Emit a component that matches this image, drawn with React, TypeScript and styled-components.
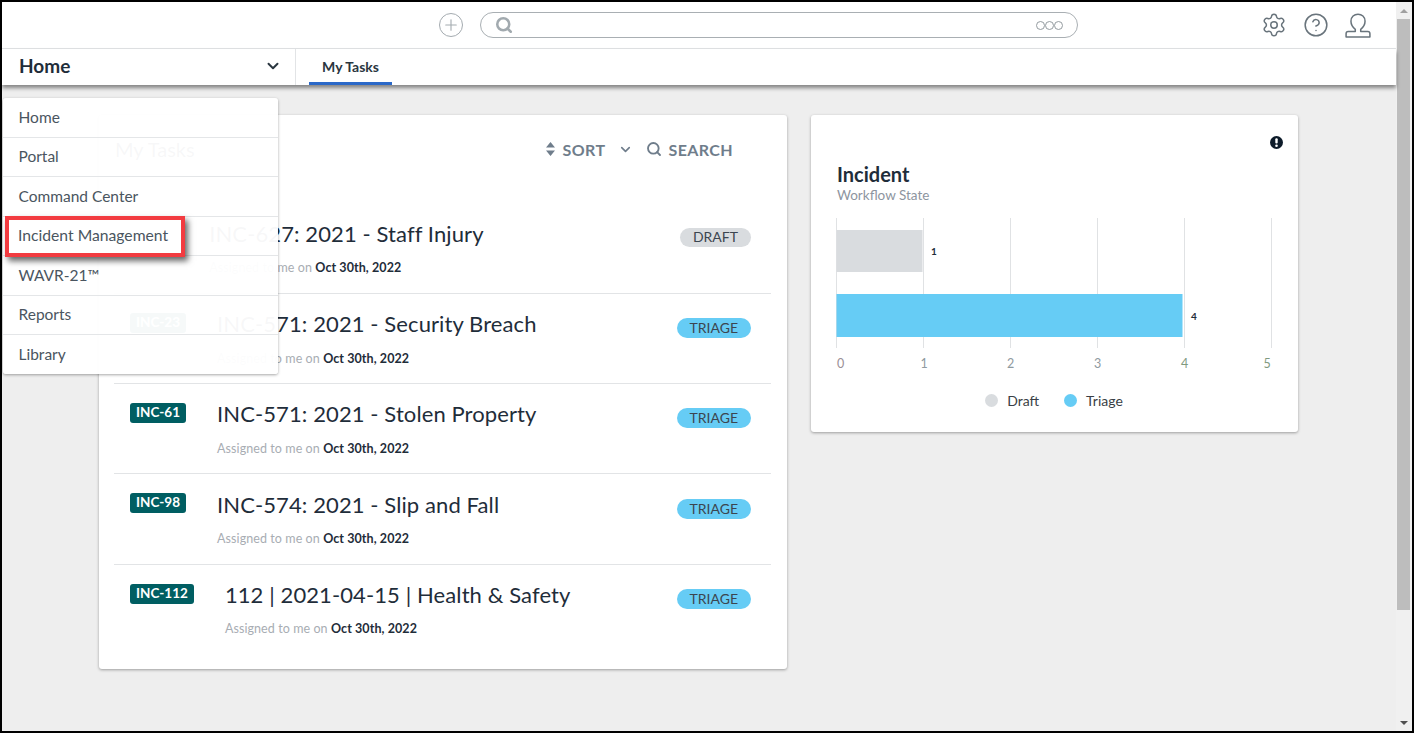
import React from "react";
import styled, { createGlobalStyle } from "styled-components";
import { Settings, CircleHelp, Plus, Search, ChevronDown } from "lucide-react";

const Global = createGlobalStyle`
  html, body { margin: 0; padding: 0; background: #000; }
  body { font-family: Lato, "Open Sans", sans-serif; overflow: hidden; }
  * { box-sizing: border-box; }
`;

const Frame = styled.div`
  position: relative; width: 1414px; height: 733px;
  border: 2px solid #000; background: #eee; display: flex; overflow: hidden;
`;
const Page = styled.div`width: 1394px; display: flex; flex-direction: column; position: relative;`;
const Scrollbar = styled.div`
  width: 16px; background: #f0f0f0; display: flex; flex-direction: column; align-items: stretch;
  padding: 0 2px 0 1px; position: relative;
`;
const Arrow = styled.div<{ $up?: boolean }>`
  height: 17px; display: flex; align-items: center; justify-content: center;
  &::after {
    content: ""; width: 0; height: 0; border-left: 4px solid transparent; border-right: 4px solid transparent;
    ${(p) => (p.$up ? "border-bottom: 4px solid #a0a0a0;" : "border-top: 4px solid #505050;")}
  }
`;
const Thumb = styled.div`height: 591px; background: #bdbdbd;`;
const Track = styled.div`flex: 1;`;

const TopBar = styled.header`
  height: 47px; background: #fff; border-bottom: 1px solid #e2e4e6; display: flex; align-items: center;
  padding: 0 25px 1px 437px; flex: none;
`;
const PlusCircle = styled.span`
  width: 24px; height: 24px; border-radius: 50%; border: 1.8px solid #a4abb0; color: #a4abb0;
  display: flex; align-items: center; justify-content: center; flex: none;
`;
const SearchPill = styled.div`
  width: 598px; height: 26px; margin-left: 17px; border: 1px solid #a9afb3; border-radius: 13px;
  display: flex; align-items: center; justify-content: space-between; padding: 0 14px 0 14px; color: #a2aaaf;
`;
const Dots = styled.span`display: flex; margin-top: 2px;`;
const Dot = styled.i`width: 9.5px; height: 9.5px; border: 1.6px solid #949ba0; border-radius: 50%; margin-left: -.5px;`;
const TopIcons = styled.div`margin-left: auto; display: flex; align-items: center; gap: 16px; color: #69747c;`;

const SubBar = styled.nav`
  height: 36px; background: #fff; display: flex; flex: none; position: relative; z-index: 2;
  box-shadow: 0 3px 4px rgba(0,0,0,.45);
`;
const AppSelect = styled.div`
  width: 294px; border-right: 1px solid #e2e4e6; display: flex; align-items: center; justify-content: space-between;
  padding: 0 13px 3px 17px; font-size: 19px; font-weight: 700; color: #1f2d3a;
`;
const Tab = styled.div`
  margin-left: 13px; width: 83px; text-align: center; font-size: 14px; font-weight: 700; color: #2a3640;
  border-bottom: 3px solid #2a68c8; line-height: 35px; height: 36px;
`;

const Main = styled.main`display: flex; align-items: flex-start; gap: 24px; padding: 30px 0 0 97px; flex: 1;`;
const Card = styled.section<{ $w: number; $h: number }>`
  width: ${(p) => p.$w}px; height: ${(p) => p.$h}px; background: #fff; border-radius: 3px;
  box-shadow: 0 1px 3px rgba(0,0,0,.35);
`;
const TaskCard = styled(Card)`padding: 0 16px 0 15px;`;
const CardHead = styled.div`
  height: 88.400px; display: flex; align-items: center; padding: 0 38px 20px 1px;
`;
const CardTitle = styled.h2`margin: 0; font-size: 20px; font-weight: 400; color: #1f2d3a; margin-right: auto;`;
const Tool = styled.span`
  display: flex; align-items: center; font-size: 16px; font-weight: 700; color: #6f7d8b; letter-spacing: .4px;
`;
const SortArrows = styled.svg`margin-right: 8px;`;
const SortChevron = styled(Tool)`margin: 0 13px 0 13px;`;
const SearchIcon = styled(Search)`margin-right: 6px;`;

const Row = styled.div`
  height: 90.300px; border-bottom: 1px solid #e2e4e6; padding: 19px 20px 0 16px; display: flex; align-items: flex-start;
  &:last-child { border-bottom: 0; }
`;
const Badge = styled.span`
  background: #005e62; color: #fff; font-size: 13.500px; font-weight: 700; height: 20px; line-height: 18px;
  padding: 0 6px; border-radius: 3px; flex: none; white-space: nowrap;
`;
const RowBody = styled.div`margin-left: 31px; flex: 1; margin-top: -2.600px;`;
const RowTitle = styled.div`font-size: 22px; line-height: 28px; color: #1f2d3a; white-space: nowrap; letter-spacing: .1px;`;
const RowSub = styled.div`font-size: 12.500px; letter-spacing: .08px; line-height: 16px; margin-top: 12.500px; color: #a8adb3;`;
const RowDate = styled.b`color: #1f2d3a; font-weight: 700;`;
const Status = styled.span<{ $draft?: boolean }>`
  margin-top: 5.400px; height: ${(p) => (p.$draft ? 19 : 20)}px; line-height: ${(p) => (p.$draft ? 18 : 19)}px;
  border-radius: 10px; padding: 0 13px; font-size: 14px; color: #3c4650;
  background: ${(p) => (p.$draft ? "#d9dcdf" : "#66ccf5")}; flex: none;
`;

const ChartCard = styled(Card)`padding: 0 26px 0 25px; position: relative;`;
const Info = styled.svg`display: block; margin: 21px 0 0 auto; position: relative; left: 11px;`;
const ChartTitle = styled.h3`margin: 13px 0 0 1px; font-size: 20px; line-height: 25px; font-weight: 700; color: #1f2d3a;`;
const ChartSub = styled.div`font-size: 13.500px; line-height: 16px; color: #8d95a0; margin: 0 0 15px 1px;`;
const ChartSvg = styled.svg`display: block;`;
const Legend = styled.div`display: flex; justify-content: center; gap: 25px; margin-top: 18px; font-size: 14px; color: #3a3f46;`;
const LegendItem = styled.span`display: flex; align-items: center; gap: 9px;`;
const Swatch = styled.i<{ $c: string }>`width: 13px; height: 13px; border-radius: 50%; background: ${(p) => p.$c};`;

const Menu = styled.div`
  position: absolute; left: 1px; top: 96px; width: 275px; height: 276px; background: rgba(255,255,255,.965);
  border-radius: 3px; box-shadow: 0 1px 3px rgba(0,0,0,.35); z-index: 3; display: flex; flex-direction: column;
`;
const MenuItem = styled.div`
  flex: 1; display: flex; align-items: center; padding: 0 0 1.500px 15.500px; font-size: 15.500px; color: #4a5560;
  border-bottom: 1px solid #e4e6e8; position: relative; &:last-child { border-bottom: 0; }
`;
const Highlight = styled.div`
  position: absolute; left: 2px; top: -1px; width: 180px; height: 41px; border: 4px solid #f23b40;
  background: #fff; box-shadow: 3px 4px 6px rgba(0,0,0,.6); display: flex; align-items: center;
  padding: 0 0 2px 9px; font-size: 15.700px; color: #4a5560; white-space: nowrap;
`;

const tasks = [
  { id: "INC-7", title: "INC-627: 2021 - Staff Injury", status: "DRAFT" },
  { id: "INC-23", title: "INC-571: 2021 - Security Breach", status: "TRIAGE" },
  { id: "INC-61", title: "INC-571: 2021 - Stolen Property", status: "TRIAGE" },
  { id: "INC-98", title: "INC-574: 2021 - Slip and Fall", status: "TRIAGE" },
  { id: "INC-112", title: "112 | 2021-04-15 | Health & Safety", status: "TRIAGE" },
];
const menu = ["Home", "Portal", "Command Center", "Incident Management", "WAVR-21™", "Reports", "Library"];
const highlighted = "Incident Management";

function Chart() {
  const xs = [0, 87, 174, 261, 348, 435];
  const lx = [4.5, 88, 174.5, 261.5, 348.5, 431];
  const lc = ["#9a8f96", "#8f9aa0", "#8f9aa0", "#8f9aa0", "#7f9a7f", "#7f9a7f"];
  return (
    <ChartSvg width="437" height="156" viewBox="0 0 437 156">
      {xs.map((x) => (
        <line key={x} x1={x + 0.5} x2={x + 0.5} y1="0" y2="130" stroke="#e0e2e4" />
      ))}
      <rect x="0.5" y="12" width="86" height="42" fill="#d9dcdf" />
      <rect x="0.5" y="76" width="346" height="43" fill="#66ccf5" />
      <text x="95" y="37" fontSize="10" fontWeight="700" fill="#1f2d3a" fontFamily="Lato, sans-serif">1</text>
      <text x="355" y="102" fontSize="10" fontWeight="700" fill="#1f2d3a" fontFamily="Lato, sans-serif">4</text>
      {xs.map((x, i) => (
        <text key={x} x={lx[i]} y="150" textAnchor="middle" fontSize="12.500" fill={lc[i]} fontFamily="Lato, sans-serif">
          {i}
        </text>
      ))}
    </ChartSvg>
  );
}

export default function App() {
  return (
    <Frame>
      <Global />
      <Page>
        <TopBar>
          <PlusCircle><Plus size={18} strokeWidth={1.5} /></PlusCircle>
          <SearchPill>
            <Search size={18} strokeWidth={3.4} />
            <Dots><Dot /><Dot /><Dot /></Dots>
          </SearchPill>
          <TopIcons>
            <Settings size={26} strokeWidth={1.4} />
            <CircleHelp size={26} strokeWidth={1.4} />
            <svg width="26" height="26" viewBox="0 0 24 24" fill="none" stroke="currentColor" strokeWidth="1.4" strokeLinejoin="round">
              <path d="M9.500 16C6.500 13.500 5.500 11 5.500 8.500 5.500 4.500 8.500 2 12 2s6.500 2.500 6.500 6.500c0 2.500-1 5-4 7.500v2H21c1.500 0 2 1 2 2v3H1v-3c0-1 .5-2 2-2h6.500z" />
            </svg>
          </TopIcons>
        </TopBar>
        <SubBar>
          <AppSelect>Home<ChevronDown size={18} strokeWidth={2.6} color="#2a3640" /></AppSelect>
          <Tab>My Tasks</Tab>
        </SubBar>
        <Main>
          <TaskCard $w={688} $h={554}>
            <CardHead>
              <CardTitle>My Tasks</CardTitle>
              <Tool>
                <SortArrows width="9" height="14" viewBox="0 0 9 14" fill="currentColor"><path d="M4.500 0 9 5.500H0zM4.500 14 0 8.500h9z" /></SortArrows>
                SORT
              </Tool>
              <SortChevron><ChevronDown size={15} strokeWidth={2.6} /></SortChevron>
              <Tool><SearchIcon size={16} strokeWidth={2.8} />SEARCH</Tool>
            </CardHead>
            {tasks.map((t) => (
              <Row key={t.title}>
                <Badge>{t.id}</Badge>
                <RowBody>
                  <RowTitle>{t.title}</RowTitle>
                  <RowSub>Assigned to me on <RowDate>Oct 30th, 2022</RowDate></RowSub>
                </RowBody>
                <Status $draft={t.status === "DRAFT"}>{t.status}</Status>
              </Row>
            ))}
          </TaskCard>
          <ChartCard $w={487} $h={317}>
            <Info width="13" height="13" viewBox="0 0 13 13">
              <circle cx="6.500" cy="6.500" r="6.500" fill="#0d1b2a" />
              <rect x="5.300" y="2.300" width="2.400" height="5.200" rx="1" fill="#fff" />
              <circle cx="6.500" cy="9.700" r="1.300" fill="#fff" />
            </Info>
            <ChartTitle>Incident</ChartTitle>
            <ChartSub>Workflow State</ChartSub>
            <Chart />
            <Legend>
              <LegendItem><Swatch $c="#d9dcdf" />Draft</LegendItem>
              <LegendItem><Swatch $c="#66ccf5" />Triage</LegendItem>
            </Legend>
          </ChartCard>
        </Main>
        <Menu>
          {menu.map((m) => (
            <MenuItem key={m}>{m === highlighted ? <Highlight>{m}</Highlight> : m}</MenuItem>
          ))}
        </Menu>
      </Page>
      <Scrollbar>
        <Arrow $up />
        <Thumb />
        <Track />
        <Arrow />
      </Scrollbar>
    </Frame>
  );
}
